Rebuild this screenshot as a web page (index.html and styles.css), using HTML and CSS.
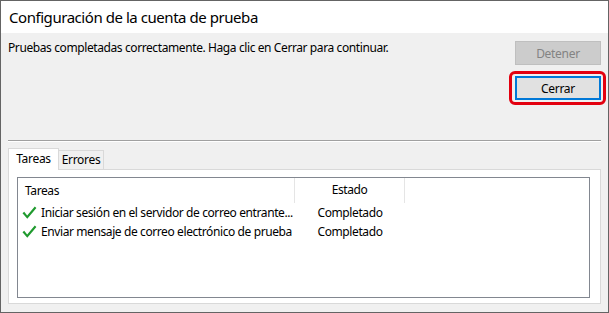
FILE: index.html
```html
<!DOCTYPE html>
<html lang="es">
<head>
<meta charset="utf-8">
<title>Configuración de la cuenta de prueba</title>
<link rel="stylesheet" href="styles.css">
</head>
<body>
<div class="window">
  <div class="titlebar">Configuración de la cuenta de prueba</div>
  <div class="content">
    <div class="top">
      <p class="msg">Pruebas completadas correctamente. Haga clic en Cerrar para continuar.</p>
      <div class="buttons">
        <button class="btn btn-disabled" disabled>Detener</button>
        <button class="btn btn-default">Cerrar</button>
      </div>
    </div>
    <div class="sep"></div>
    <div class="tabs">
      <div class="tab tab-active">Tareas</div>
      <div class="tab tab-errors">Errores</div>
    </div>
    <div class="panel">
      <div class="list">
        <div class="row header">
          <div class="c1">Tareas</div>
          <div class="c2">Estado</div>
          <div class="c3"></div>
        </div>
        <div class="row item">
          <div class="c1"><svg class="check" viewBox="0 0 16 16" width="16" height="16"><path d="M1.5 8.2 L3.2 6.8 L6.2 10.6 L13.8 1.6 L15.4 2.9 L6.3 13.8 Z" fill="#1f9a2e"/></svg><span>Iniciar sesión en el servidor de correo entrante...</span></div>
          <div class="c2">Completado</div>
          <div class="c3"></div>
        </div>
        <div class="row item">
          <div class="c1"><svg class="check" viewBox="0 0 16 16" width="16" height="16"><path d="M1.5 8.2 L3.2 6.8 L6.2 10.6 L13.8 1.6 L15.4 2.9 L6.3 13.8 Z" fill="#1f9a2e"/></svg><span>Enviar mensaje de correo electrónico de prueba</span></div>
          <div class="c2">Completado</div>
          <div class="c3"></div>
        </div>
      </div>
    </div>
  </div>
</div>
</body>
</html>
```
FILE: styles.css
```css
* { box-sizing: border-box; }
html, body { margin: 0; padding: 0; }
body {
  width: 609px;
  height: 313px;
  overflow: hidden;
  font-family: "Noto Sans", "Open Sans", sans-serif;
  font-size: 12px;
  color: #000;
  background: #f0f0f0;
}
.window {
  width: 609px;
  height: 313px;
  border: 1px solid #646464;
  display: flex;
  flex-direction: column;
  background: #f0f0f0;
}
.titlebar {
  height: 32px;
  background: #fff;
  padding: 0 0 0 8px;
  font-size: 15px;
  line-height: 32px;
  letter-spacing: -0.45px;
  white-space: nowrap;
}
.content {
  flex: 1;
  display: flex;
  flex-direction: column;
  padding: 0 7px 8px 7px;
}
.top {
  display: flex;
  justify-content: space-between;
  align-items: flex-start;
  height: 107px;
}
.msg {
  margin: 7px 0 0 0;
  line-height: 16px;
  letter-spacing: -0.4px;
  white-space: nowrap;
}
.buttons {
  display: flex;
  flex-direction: column;
  gap: 11px;
  padding-top: 8px;
}
.btn {
  width: 86px;
  height: 24px;
  font-family: inherit;
  font-size: 12px;
  letter-spacing: -0.3px;
  padding: 0;
  margin: 0;
  border: 1px solid #adadad;
  background: #e1e1e1;
  color: #000;
}
.btn-disabled {
  background: #cccccc;
  border-color: #bfbfbf;
  color: #838383;
}
.btn-default {
  position: relative;
  border: 1px solid #0078d7;
  box-shadow: inset 0 0 0 1px #0078d7;
}
.btn-default::after {
  content: "";
  position: absolute;
  left: -7px;
  top: -6px;
  right: -6px;
  bottom: -6px;
  border: 3px solid #e3000f;
  border-radius: 6px;
}
.sep {
  height: 2px;
  border-top: 1px solid #a0a0a0;
  border-bottom: 1px solid #ffffff;
}
.tabs {
  display: flex;
  align-items: flex-end;
  margin-top: 6px;
  height: 21px;
}
.tab {
  height: 19px;
  border: 1px solid #d9d9d9;
  border-bottom: none;
  background: #f0f0f0;
  line-height: 18px;
  font-size: 12px;
  letter-spacing: -0.3px;
  text-align: center;
}
.tab-active {
  width: 51px;
  height: 22px;
  background: #fff;
  line-height: 19px;
  position: relative;
  z-index: 1;
  margin-bottom: -1px;
}
.tab-errors {
  width: 46px;
  margin-left: -1px;
}
.panel {
  flex: 1;
  border: 1px solid #d9d9d9;
  background: #fff;
  padding: 7px 10px 5px 8px;
  display: flex;
}
.list {
  flex: 1;
  border: 1px solid #828790;
  background: #fff;
}
.row {
  display: flex;
  white-space: nowrap;
  letter-spacing: -0.4px;
}
.header {
  height: 25px;
  line-height: 23px;
}
.header .c1, .header .c2 {
  border-right: 1px solid #e5e5e5;
}
.c1 {
  width: 277px;
  padding-left: 7px;
  overflow: hidden;
  display: flex;
  align-items: center;
}
.c2 {
  width: 110px;
  text-align: center;
}
.c3 { flex: 1; }
.item {
  height: 19px;
  line-height: 19px;
}
.item .c1 {
  padding-left: 3px;
}
.check {
  flex: none;
  margin-right: 4px;
}
```
